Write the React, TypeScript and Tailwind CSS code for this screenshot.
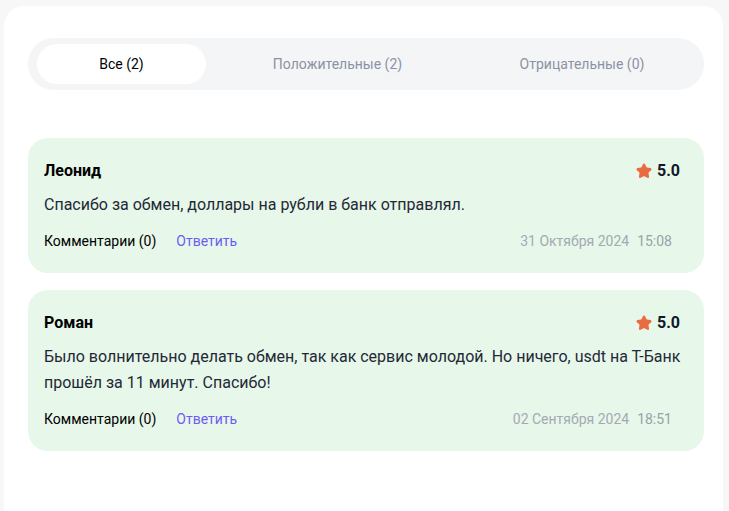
import { Star } from "lucide-react";

const reviews = [
    {
        name: "Леонид",
        rating: "5.0",
        text: "Спасибо за обмен, доллары на рубли в банк отправлял.",
        date: "31 Октября 2024",
        time: "15:08",
    },
    {
        name: "Роман",
        rating: "5.0",
        text: "Было волнительно делать обмен, так как сервис молодой. Но ничего, usdt на Т-Банк прошёл за 11 минут. Спасибо!",
        date: "02 Сентября 2024",
        time: "18:51",
    },
];

function ReviewCard({ review }: { review: (typeof reviews)[number] }) {
    // keep "Т-Банк" together so the line breaks like the original
    const parts = review.text.split("Т-Банк");
    return (
        <div className="rounded-[20px] bg-[#e7f7e9] pl-4 pr-6 pt-[21px] pb-[22px]">
            <div className="flex items-center justify-between mb-[9px]">
                <span className="text-base leading-6 font-bold text-black">{review.name}</span>
                <span className="flex items-center gap-[5px]">
                    <Star className="w-4 h-4 text-[#e96c42]" fill="currentColor" strokeWidth={2.5} />
                    <span className="text-base leading-6 font-bold text-[#111827]">{review.rating}</span>
                </span>
            </div>
            <p className="-mr-3 text-base leading-[26px] text-[#1f2937] mb-[13px]">
                {parts.length > 1 ? (
                    <>
                        {parts[0]}
                        <span className="whitespace-nowrap">Т-Банк</span>
                        {parts[1]}
                    </>
                ) : (
                    review.text
                )}
            </p>
            <div className="flex items-center justify-between text-sm leading-5">
                <div className="flex items-center gap-5">
                    <span className="text-black">Комментарии (0)</span>
                    <span className="text-[#6d5cf3]">Ответить</span>
                </div>
                <div className="flex items-center gap-2 pr-2 text-[#a3aab4]">
                    <span>{review.date}</span>
                    <span className="text-[#9aa1ab]">{review.time}</span>
                </div>
            </div>
        </div>
    );
}

export default function App() {
    return (
        <div
            className="min-h-[511px] bg-[#f7f7f7] pt-[6px] pl-1 pr-[6px]"
            style={{ fontFamily: "Roboto, 'Liberation Sans', sans-serif" }}
        >
            <div className="min-h-[505px] rounded-t-[20px] bg-white pl-6 pr-[19px] pt-8">
                {/* Tabs */}
                <div className="flex items-center rounded-full bg-[#f4f5f7] px-[9px] py-[6px] text-sm">
                    <button className="w-[169px] h-10 rounded-full bg-white text-black">Все (2)</button>
                    <button className="w-[263px] h-10 text-[#8a93a3]">Положительные (2)</button>
                    <button className="flex-1 h-10 text-[#8a93a3]">Отрицательные (0)</button>
                </div>

                <div className="mt-12 flex flex-col gap-[17px]">
                    {reviews.map((r) => (
                        <ReviewCard key={r.name} review={r} />
                    ))}
                </div>
            </div>
        </div>
    );
}
